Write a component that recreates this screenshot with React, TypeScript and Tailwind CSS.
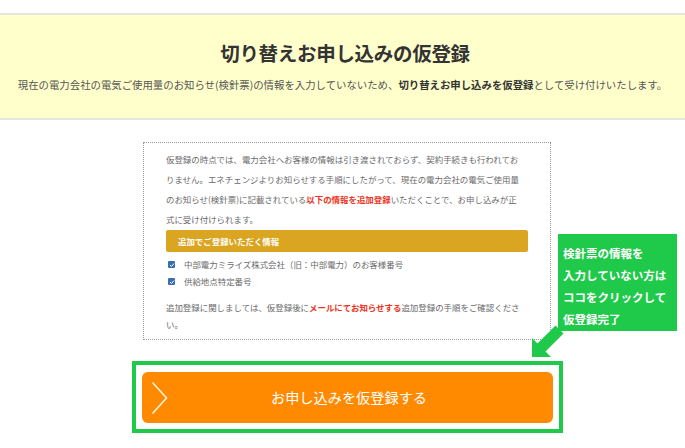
import React from "react";

const jp = { fontFamily: '"Noto Sans CJK JP", "Noto Sans", sans-serif' };

export default function App() {
  return (
    <div className="relative w-[685px] h-[448px] overflow-hidden bg-white" style={jp}>
      <div className="h-[13px]" />
      <section className="h-[107px] bg-[#ffffcc] border-y-2 border-[#e6e6e0] flex flex-col items-center pt-[24px]">
        <h1 className="text-[19.5px] leading-[28px] font-bold text-[#333] tracking-[-0.3px] pl-[5px]">
          切り替えお申し込みの仮登録
        </h1>
        <p className="mt-[11px] text-[10.4px] leading-[14px] text-[#555] whitespace-nowrap">
          現在の電力会社の電気ご使用量のお知らせ(検針票)の情報を入力していないため、
          <b className="text-[#333]">切り替えお申し込みを仮登録</b>
          として受け付けいたします。
        </p>
      </section>

      <div className="mt-[22px] ml-[143px] w-[408px] border border-dotted border-[#999] px-[22px] pt-[6px] pb-[6px] text-[8.45px] text-[#6a6a6a] whitespace-nowrap">
        <div className="leading-[20px]">
          <div>仮登録の時点では、電力会社へお客様の情報は引き渡されておらず、契約手続きも行われてお</div>
          <div>りません。エネチェンジよりお知らせする手順にしたがって、現在の電力会社の電気ご使用量</div>
          <div>
            のお知らせ(検針票)に記載されている
            <b className="text-[#ee3322]">以下の情報を追加登録</b>
            いただくことで、お申し込みが正
          </div>
          <div>式に受け付けられます。</div>
        </div>
        <div className="mt-[1px] h-[22px] rounded-[2px] bg-[#daa520] text-white font-bold flex items-center pl-[12px]">
          追加でご登録いただく情報
        </div>
        <ul className="mt-[4px] leading-[17px]">
          <li className="flex items-center pl-[2px]">
            <span className="w-[7px] h-[7px] rounded-[1px] bg-[#3b6db3] mr-[9px] flex items-center justify-center">
              <svg width="6" height="6" viewBox="0 0 6 6"><path d="M1 3 L2.5 4.5 L5 1.5" stroke="white" strokeWidth="1" fill="none" /></svg>
            </span>
            中部電力ミライズ株式会社（旧：中部電力）のお客様番号
          </li>
          <li className="flex items-center pl-[2px]">
            <span className="w-[7px] h-[7px] rounded-[1px] bg-[#3b6db3] mr-[9px] flex items-center justify-center">
              <svg width="6" height="6" viewBox="0 0 6 6"><path d="M1 3 L2.5 4.5 L5 1.5" stroke="white" strokeWidth="1" fill="none" /></svg>
            </span>
            供給地点特定番号
          </li>
        </ul>
        <div className="mt-[9px] leading-[17px]">
          <div>
            追加登録に関しましては、仮登録後に
            <b className="text-[#ee3322]">メールにてお知らせする</b>
            追加登録の手順をご確認くださ
          </div>
          <div>い。</div>
        </div>
      </div>

      <div className="mt-[21px] ml-[132px] w-[431px] h-[72px] border-4 border-[#1fc94a] px-[6px] pt-[7px] pb-[6px]">
        <button className="relative w-full h-full rounded-[6px] bg-[#ff8a00] text-white text-[14.2px] flex items-center justify-center pl-[3px]">
          <svg className="absolute left-[9px] top-[9px]" width="18" height="34" viewBox="0 0 18 34">
            <path d="M1.5 1.5 L15.5 17 L1.5 32.5" stroke="#fff4d6" strokeWidth="1.6" fill="none" />
          </svg>
          お申し込みを仮登録する
        </button>
      </div>

      <div className="absolute left-[558px] top-[234px] w-[119px] h-[97px] bg-[#1fc94a] text-white font-bold text-[11.5px] leading-[22px] pl-[5px] pt-[8px]">
        <div>検針票の情報を</div>
        <div>入力していない方は</div>
        <div>ココをクリックして</div>
        <div>仮登録完了</div>
      </div>

      <svg className="absolute left-[525px] top-[325px]" width="40" height="40" viewBox="0 0 40 40">
        <polygon
          points="7,32 7,13 12.5,18.5 30.5,0.5 38.5,8.5 20.5,26.5 26,32"
          fill="#1fc94a"
        />
      </svg>
    </div>
  );
}
